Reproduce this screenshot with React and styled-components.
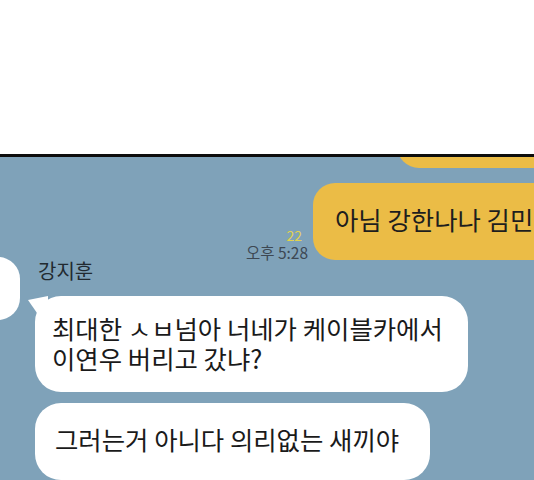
import React from "react";
import styled, { createGlobalStyle } from "styled-components";

const Global = createGlobalStyle`
  html, body { margin: 0; padding: 0; background: #ffffff; }
  body { font-family: "Noto Sans CJK KR", "Noto Sans", sans-serif; }
`;

const Page = styled.div`
  width: 534px;
  height: 480px;
  display: flex;
  flex-direction: column;
  overflow: hidden;
  background: #ffffff;
`;

const TopBlank = styled.div`
  height: 154px;
  flex: 0 0 auto;
  background: #ffffff;
`;

const Divider = styled.div`
  height: 3px;
  flex: 0 0 auto;
  background: #0d0d0d;
`;

const Chat = styled.div`
  flex: 1 1 auto;
  background: #7fa2b9;
  overflow: hidden;
  display: flex;
  flex-direction: column;
  font-family: "Noto Sans CJK KR", "Noto Sans", sans-serif;
`;

const MyRow = styled.div`
  display: flex;
  justify-content: flex-end;
  align-items: flex-end;
  margin-right: -40px;
  margin-top: ${(p) => p.$top}px;
`;

const MyBubble = styled.div`
  width: ${(p) => p.$w}px;
  height: ${(p) => p.$h}px;
  box-sizing: border-box;
  background: #ebbc46;
  border-radius: 22px;
  padding: 19px 0 0 22px;
  font-size: 25.4px;
  line-height: 34px;
  color: #1e1e1e;
  white-space: nowrap;
`;

const Meta = styled.div`
  display: flex;
  flex-direction: column;
  align-items: flex-end;
  margin-right: 5px;
  margin-bottom: -1px;
`;

const Unread = styled.span`
  font-size: 14px;
  line-height: 15px;
  color: #e3d34c;
  margin-right: 6px;
`;

const Time = styled.span`
  font-size: 15.5px;
  line-height: 18px;
  color: #3d4853;
`;

const FriendGroup = styled.div`
  display: flex;
  align-items: flex-start;
  margin-top: -3px;
`;

const Avatar = styled.div`
  width: 60px;
  height: 63px;
  flex: 0 0 auto;
  margin-left: -40px;
  background: #ffffff;
  border-radius: 22px;
`;

const FriendColumn = styled.div`
  display: flex;
  flex-direction: column;
  align-items: flex-start;
  margin-left: 15px;
`;

const Name = styled.div`
  font-size: 20px;
  line-height: 24px;
  color: #222a30;
  margin: 2px 0 0 3px;
`;

const Bubble = styled.div`
  position: relative;
  width: ${(p) => p.$w}px;
  height: ${(p) => p.$h}px;
  box-sizing: border-box;
  margin-top: ${(p) => p.$top}px;
  padding: ${(p) => p.$pt}px 0 0 ${(p) => p.$pl}px;
  background: #ffffff;
  border-radius: 26px;
  font-size: 25.4px;
  line-height: 30px;
  color: #1a1a1a;
  white-space: nowrap;

  &::before {
    content: "";
    display: ${(p) => (p.$tail ? "block" : "none")};
    position: absolute;
    left: -7px;
    top: 0;
    width: 20px;
    height: 17px;
    background: #ffffff;
    clip-path: polygon(0 24%, 100% 0, 100% 100%, 45% 100%);
  }
`;

export default function App() {
  return (
    <>
      <Global />
      <Page>
        <TopBlank />
        <Divider />
        <Chat>
          <MyRow $top={-49}>
            <MyBubble $w={177} $h={60} />
          </MyRow>
          <MyRow $top={15}>
            <Meta>
              <Unread>22</Unread>
              <Time>오후 5:28</Time>
            </Meta>
            <MyBubble $w={261} $h={77}>아님 강한나나 김민</MyBubble>
          </MyRow>
          <FriendGroup>
            <Avatar />
            <FriendColumn>
              <Name>강지훈</Name>
              <Bubble $tail $w={433} $h={96} $top={13} $pt={17} $pl={17}>
                최대한 ㅅㅂ넘아 너네가 케이블카에서
                <br />
                이연우 버리고 갔냐?
              </Bubble>
              <Bubble $w={395} $h={77} $top={11} $pt={21} $pl={20}>
                그러는거 아니다 의리없는 새끼야
              </Bubble>
            </FriendColumn>
          </FriendGroup>
        </Chat>
      </Page>
    </>
  );
}
